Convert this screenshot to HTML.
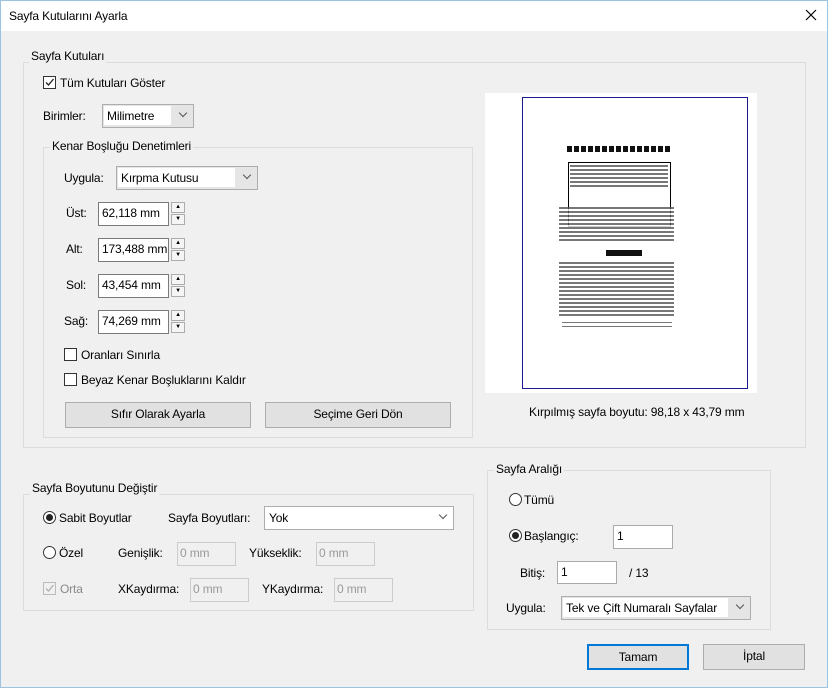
<!DOCTYPE html>
<html><head><meta charset="utf-8"><style>
*{box-sizing:border-box;margin:0;padding:0}
body{width:828px;height:688px;background:#f0f0f0;font-family:"Liberation Sans",sans-serif;font-size:12px;letter-spacing:-0.15px;color:#000;position:relative;overflow:hidden}
.a{position:absolute}
.t{position:absolute;line-height:14px;white-space:nowrap}
.grp{position:absolute;border:1px solid #dcdcdc}
.leg{position:absolute;background:#f0f0f0;padding:0 2px;line-height:14px;white-space:nowrap}
.in{position:absolute;background:#fff;border:1px solid #7a7a7a;line-height:21px;padding-left:3px;white-space:nowrap}
.dis{position:absolute;background:#f0f0f0;border:1px solid #ccc;color:#999;line-height:21px;padding-left:2px}
.cb{position:absolute;border:1px solid #adadad;background:#e5e5e5;line-height:21px;padding-left:3px}
.cb span{background:#fff;display:block;height:19px;margin:1px 22px 1px 0;padding-left:3px;margin-left:-2px}
.cb i{position:absolute;right:7px;top:5px;width:6px;height:6px;border-right:1px solid #555;border-bottom:1px solid #555;transform:rotate(45deg)}
.chk{position:absolute;width:13px;height:13px;border:1px solid #333;background:#fff}
.rad{position:absolute;width:13px;height:13px;border:1px solid #333;border-radius:50%;background:#fff}
.rad.on::after{content:"";position:absolute;left:2px;top:2px;width:7px;height:7px;border-radius:50%;background:#222}
.btn{position:absolute;background:#e1e1e1;border:1px solid #adadad;text-align:center;line-height:23px}
.sp{position:absolute;width:14px;height:11px;border:1px solid #adadad;background:#f5f5f5;font-size:6px;text-align:center;line-height:9px}
.frame{position:absolute;left:0;top:0;width:828px;height:688px;border:1px solid #9cc3e0;pointer-events:none}
</style></head><body>
<div class="a" style="left:0;top:0;width:828px;height:31px;background:#fff"></div>
<div class="t" style="left:9px;top:9px">Sayfa Kutularını Ayarla</div>
<svg class="a" style="left:805px;top:9px" width="12" height="12"><path d="M1 1L11 11M11 1L1 11" stroke="#000" stroke-width="1.2"/></svg>

<div class="grp" style="left:23px;top:62px;width:783px;height:386px"></div>
<div class="leg" style="left:29px;top:49px">Sayfa Kutuları</div>
<div class="chk" style="left:43px;top:76px"><svg width="11" height="11" style="position:absolute;left:0;top:0"><path d="M2 5.5L4.5 8L9.5 2" stroke="#222" fill="none" stroke-width="1.3"/></svg></div>
<div class="t" style="left:60px;top:76px">Tüm Kutuları Göster</div>
<div class="t" style="left:43px;top:109px">Birimler:</div>
<div class="cb" style="left:102px;top:104px;width:92px;height:24px"><span>Milimetre</span><i></i></div>

<div class="grp" style="left:43px;top:147px;width:430px;height:291px"></div>
<div class="leg" style="left:50px;top:139px">Kenar Boşluğu Denetimleri</div>
<div class="t" style="left:64px;top:171px">Uygula:</div>
<div class="cb" style="left:116px;top:166px;width:142px;height:24px"><span>Kırpma Kutusu</span><i></i></div>

<div class="t" style="left:66px;top:206px">Üst:</div>
<div class="in" style="left:98px;top:202px;width:71px;height:24px">62,118 mm</div>
<div class="sp" style="left:171px;top:202px">▲</div><div class="sp" style="left:171px;top:214px">▼</div>
<div class="t" style="left:66px;top:242px">Alt:</div>
<div class="in" style="left:98px;top:238px;width:71px;height:24px">173,488 mm</div>
<div class="sp" style="left:171px;top:238px">▲</div><div class="sp" style="left:171px;top:250px">▼</div>
<div class="t" style="left:66px;top:278px">Sol:</div>
<div class="in" style="left:98px;top:274px;width:71px;height:24px">43,454 mm</div>
<div class="sp" style="left:171px;top:274px">▲</div><div class="sp" style="left:171px;top:286px">▼</div>
<div class="t" style="left:64px;top:314px">Sağ:</div>
<div class="in" style="left:98px;top:310px;width:71px;height:24px">74,269 mm</div>
<div class="sp" style="left:171px;top:310px">▲</div><div class="sp" style="left:171px;top:322px">▼</div>

<div class="chk" style="left:64px;top:348px"></div>
<div class="t" style="left:81px;top:348px">Oranları Sınırla</div>
<div class="chk" style="left:64px;top:373px"></div>
<div class="t" style="left:81px;top:373px">Beyaz Kenar Boşluklarını Kaldır</div>
<div class="btn" style="left:65px;top:402px;width:186px;height:26px">Sıfır Olarak Ayarla</div>
<div class="btn" style="left:265px;top:402px;width:186px;height:26px">Seçime Geri Dön</div>

<div class="a" style="left:485px;top:93px;width:272px;height:300px;background:#fff"></div>
<div class="a" style="left:522px;top:97px;width:226px;height:292px;border:1px solid #1a1a8c"></div>
<div class="a" style="left:568px;top:162px;width:103px;height:65px;border:1px solid #000"></div>
<div class="a" style="left:567px;top:146px;width:103px;height:6px;background:repeating-linear-gradient(90deg,#111 0 5px,#fff 5px 7px)"></div>
<div class="a" style="left:570px;top:165px;width:98px;height:24px;background:repeating-linear-gradient(180deg,#555 0 2px,#fff 2px 4px);opacity:.8"></div>
<div class="a" style="left:559px;top:207px;width:115px;height:36px;background:repeating-linear-gradient(180deg,#555 0 2px,#fff 2px 4px);opacity:.8"></div>
<div class="a" style="left:606px;top:250px;width:36px;height:6px;background:#111"></div>
<div class="a" style="left:559px;top:262px;width:115px;height:55px;background:repeating-linear-gradient(180deg,#555 0 2px,#fff 2px 4px);opacity:.8"></div>
<div class="a" style="left:562px;top:322px;width:110px;height:8px;background:repeating-linear-gradient(180deg,#777 0 1px,#fff 1px 4px)"></div>
<div class="t" style="left:529px;top:405px">Kırpılmış sayfa boyutu: 98,18 x 43,79 mm</div>

<div class="grp" style="left:23px;top:494px;width:451px;height:117px"></div>
<div class="leg" style="left:30px;top:481px">Sayfa Boyutunu Değiştir</div>
<div class="rad on" style="left:43px;top:511px"></div>
<div class="t" style="left:59px;top:511px">Sabit Boyutlar</div>
<div class="t" style="left:168px;top:511px">Sayfa Boyutları:</div>
<div class="cb" style="left:264px;top:506px;width:190px;height:24px;background:#fff"><span>Yok</span><i></i></div>
<div class="rad" style="left:43px;top:546px"></div>
<div class="t" style="left:59px;top:546px">Özel</div>
<div class="t" style="left:118px;top:546px">Genişlik:</div>
<div class="dis" style="left:177px;top:542px;width:59px;height:24px">0 mm</div>
<div class="t" style="left:249px;top:546px">Yükseklik:</div>
<div class="dis" style="left:316px;top:542px;width:59px;height:24px">0 mm</div>
<div class="chk" style="left:43px;top:582px;border-color:#bbb;background:#f0f0f0"><svg width="11" height="11" style="position:absolute;left:0;top:0"><path d="M2 5.5L4.5 8L9.5 2" stroke="#aaa" fill="none" stroke-width="1.2"/></svg></div>
<div class="t" style="left:60px;top:582px;color:#888">Orta</div>
<div class="t" style="left:118px;top:582px">XKaydırma:</div>
<div class="dis" style="left:190px;top:578px;width:59px;height:24px">0 mm</div>
<div class="t" style="left:262px;top:582px">YKaydırma:</div>
<div class="dis" style="left:334px;top:578px;width:59px;height:24px">0 mm</div>

<div class="grp" style="left:487px;top:470px;width:284px;height:160px"></div>
<div class="leg" style="left:494px;top:462px">Sayfa Aralığı</div>
<div class="rad" style="left:509px;top:493px"></div>
<div class="t" style="left:524px;top:493px">Tümü</div>
<div class="rad on" style="left:509px;top:529px"></div>
<div class="t" style="left:524px;top:529px">Başlangıç:</div>
<div class="in" style="left:613px;top:525px;width:60px;height:24px;border-color:#aaa">1</div>
<div class="t" style="left:520px;top:566px">Bitiş:</div>
<div class="in" style="left:557px;top:561px;width:60px;height:23px;border-color:#aaa">1</div>
<div class="t" style="left:629px;top:566px">/ 13</div>
<div class="t" style="left:506px;top:601px">Uygula:</div>
<div class="cb" style="left:561px;top:596px;width:190px;height:24px"><span>Tek ve Çift Numaralı Sayfalar</span><i></i></div>

<div class="btn" style="left:587px;top:644px;width:102px;height:26px;border:2px solid #0078d7;line-height:22px">Tamam</div>
<div class="btn" style="left:703px;top:644px;width:102px;height:26px">İptal</div>
<div class="frame"></div>
</body></html>
